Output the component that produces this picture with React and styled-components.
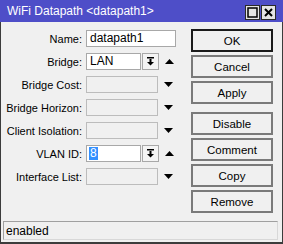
import styled, { createGlobalStyle } from 'styled-components';

const GlobalStyle = createGlobalStyle`
  html, body {
    margin: 0;
    padding: 0;
    background: #f0f0f0;
  }
  body {
    font-family: "Liberation Sans", Arial, sans-serif;
    font-size: 11px;
    color: #000;
  }
`;

const Window = styled.div`
  width: 283px;
  height: 244px;
  box-sizing: border-box;
  display: flex;
  flex-direction: column;
  background: #f0f0f0;
  border: 1px solid #3c3c3c;
  border-top: none;
  border-bottom-width: 2px;
`;

const TitleBar = styled.div`
  height: 22px;
  margin: 0 -1px;
  flex-shrink: 0;
  display: flex;
  align-items: center;
  justify-content: space-between;
  padding: 0 7px 0 7px;
  background: #4e4ec8;
  color: #fff;
  font-size: 12px;
`;

const TitleButtons = styled.div`
  display: flex;
  gap: 1px;
  padding-top: 2px;
`;

const TitleButton = styled.div`
  width: 15px;
  height: 15px;
  box-sizing: border-box;
  border: 1px solid #2a2a2a;
  background: #e4e4e4;
  display: flex;
  align-items: center;
  justify-content: center;
`;

const Main = styled.div`
  flex: 1;
  display: flex;
  padding: 0 9px 0 2px;
`;

const Form = styled.div`
  width: 186px;
  padding-top: 8px;
  display: flex;
  flex-direction: column;
  gap: 6px;
`;

const Row = styled.div`
  height: 17px;
  display: flex;
  align-items: center;
`;

const Label = styled.div`
  width: 79px;
  padding-right: 4px;
  text-align: right;
  white-space: nowrap;
`;

const Input = styled.div`
  width: ${(p) => p.w}px;
  height: 17px;
  box-sizing: border-box;
  border: 1px solid ${(p) => (p.disabled ? '#bcbcbc' : '#a8a8a8')};
  background: ${(p) => (p.disabled ? '#f0f0f0' : '#fff')};
  padding: 1px 3px;
  line-height: 13px;
  font-size: 12px;
  white-space: nowrap;
`;

const Selected = styled.span`
  display: inline-block;
  background: #3390ff;
  color: #fff;
  padding: 0 1px;
  margin-left: -1px;
`;

const DropButton = styled.div`
  width: 17px;
  height: 17px;
  margin-left: 1px;
  box-sizing: border-box;
  border: 1px solid #a8a8a8;
  background: #f4f4f4;
  display: flex;
  align-items: center;
  justify-content: center;
`;

const Arrow = styled.div`
  width: 9px;
  margin-left: 6px;
  display: flex;
  align-items: center;
`;

const Buttons = styled.div`
  padding-top: 7px;
  margin-left: auto;
  display: flex;
  flex-direction: column;
  gap: 3px;
`;

const Button = styled.div`
  width: 82px;
  height: 23px;
  box-sizing: border-box;
  border: ${(p) => (p.primary ? '2px solid #1a1a1a' : '2px solid #7a7a7a')};
  background: #f0f0f0;
  display: flex;
  align-items: center;
  justify-content: center;
  font-size: 11.5px;
  margin-top: ${(p) => (p.gapBefore ? 5 : 0)}px;
`;

const StatusBar = styled.div`
  margin: 0 4px 2px 2px;
  height: 19px;
  box-sizing: border-box;
  border: 1px solid #a0a0a0;
  border-right-color: #d8d8d8;
  border-bottom-color: #d8d8d8;
  padding: 2px 2px;
  font-size: 12px;
  line-height: 14px;
`;

const DropIcon = () => (
  <svg width="9" height="9" viewBox="0 0 9 9">
    <rect x="1" y="0" width="7" height="1.5" fill="#000" />
    <rect x="3.5" y="2" width="2" height="3" fill="#000" />
    <polygon points="1,5 8,5 4.5,8.5" fill="#000" />
  </svg>
);

const Tri = ({ up }) => (
  <svg width="9" height="6" viewBox="0 0 9 6">
    <polygon points={up ? '0,5 9,5 4.5,0' : '0,0 9,0 4.5,5'} fill="#000" />
  </svg>
);

const fields = [
  { label: 'Name:', value: 'datapath1', w: 90 },
  { label: 'Bridge:', value: 'LAN', w: 55, drop: true, arrow: 'up' },
  { label: 'Bridge Cost:', w: 72, disabled: true, arrow: 'down' },
  { label: 'Bridge Horizon:', w: 72, disabled: true, arrow: 'down' },
  { label: 'Client Isolation:', w: 72, disabled: true, arrow: 'down' },
  { label: 'VLAN ID:', value: '8', selected: true, w: 55, drop: true, arrow: 'up' },
  { label: 'Interface List:', w: 72, disabled: true, arrow: 'down' },
];

const buttons = ['OK', 'Cancel', 'Apply', 'Disable', 'Comment', 'Copy', 'Remove'];

export default function App() {
  return (
    <>
      <GlobalStyle />
      <Window>
        <TitleBar>
          <span>WiFi Datapath &lt;datapath1&gt;</span>
          <TitleButtons>
            <TitleButton>
              <svg width="11" height="11" viewBox="0 0 11 11">
                <rect x="1" y="1" width="9" height="9" fill="none" stroke="#000" strokeWidth="1.5" />
              </svg>
            </TitleButton>
            <TitleButton>
              <svg width="11" height="11" viewBox="0 0 11 11">
                <path d="M2 2 L9 9 M9 2 L2 9" stroke="#000" strokeWidth="2" />
              </svg>
            </TitleButton>
          </TitleButtons>
        </TitleBar>
        <Main>
          <Form>
            {fields.map((f) => (
              <Row key={f.label}>
                <Label>{f.label}</Label>
                <Input w={f.w} disabled={f.disabled}>
                  {f.selected ? <Selected>{f.value}</Selected> : f.value}
                </Input>
                {f.drop && (
                  <DropButton>
                    <DropIcon />
                  </DropButton>
                )}
                {f.arrow && (
                  <Arrow>
                    <Tri up={f.arrow === 'up'} />
                  </Arrow>
                )}
              </Row>
            ))}
          </Form>
          <Buttons>
            {buttons.map((b) => (
              <Button key={b} primary={b === 'OK'} gapBefore={b === 'Disable'}>
                {b}
              </Button>
            ))}
          </Buttons>
        </Main>
        <StatusBar>enabled</StatusBar>
      </Window>
    </>
  );
}
